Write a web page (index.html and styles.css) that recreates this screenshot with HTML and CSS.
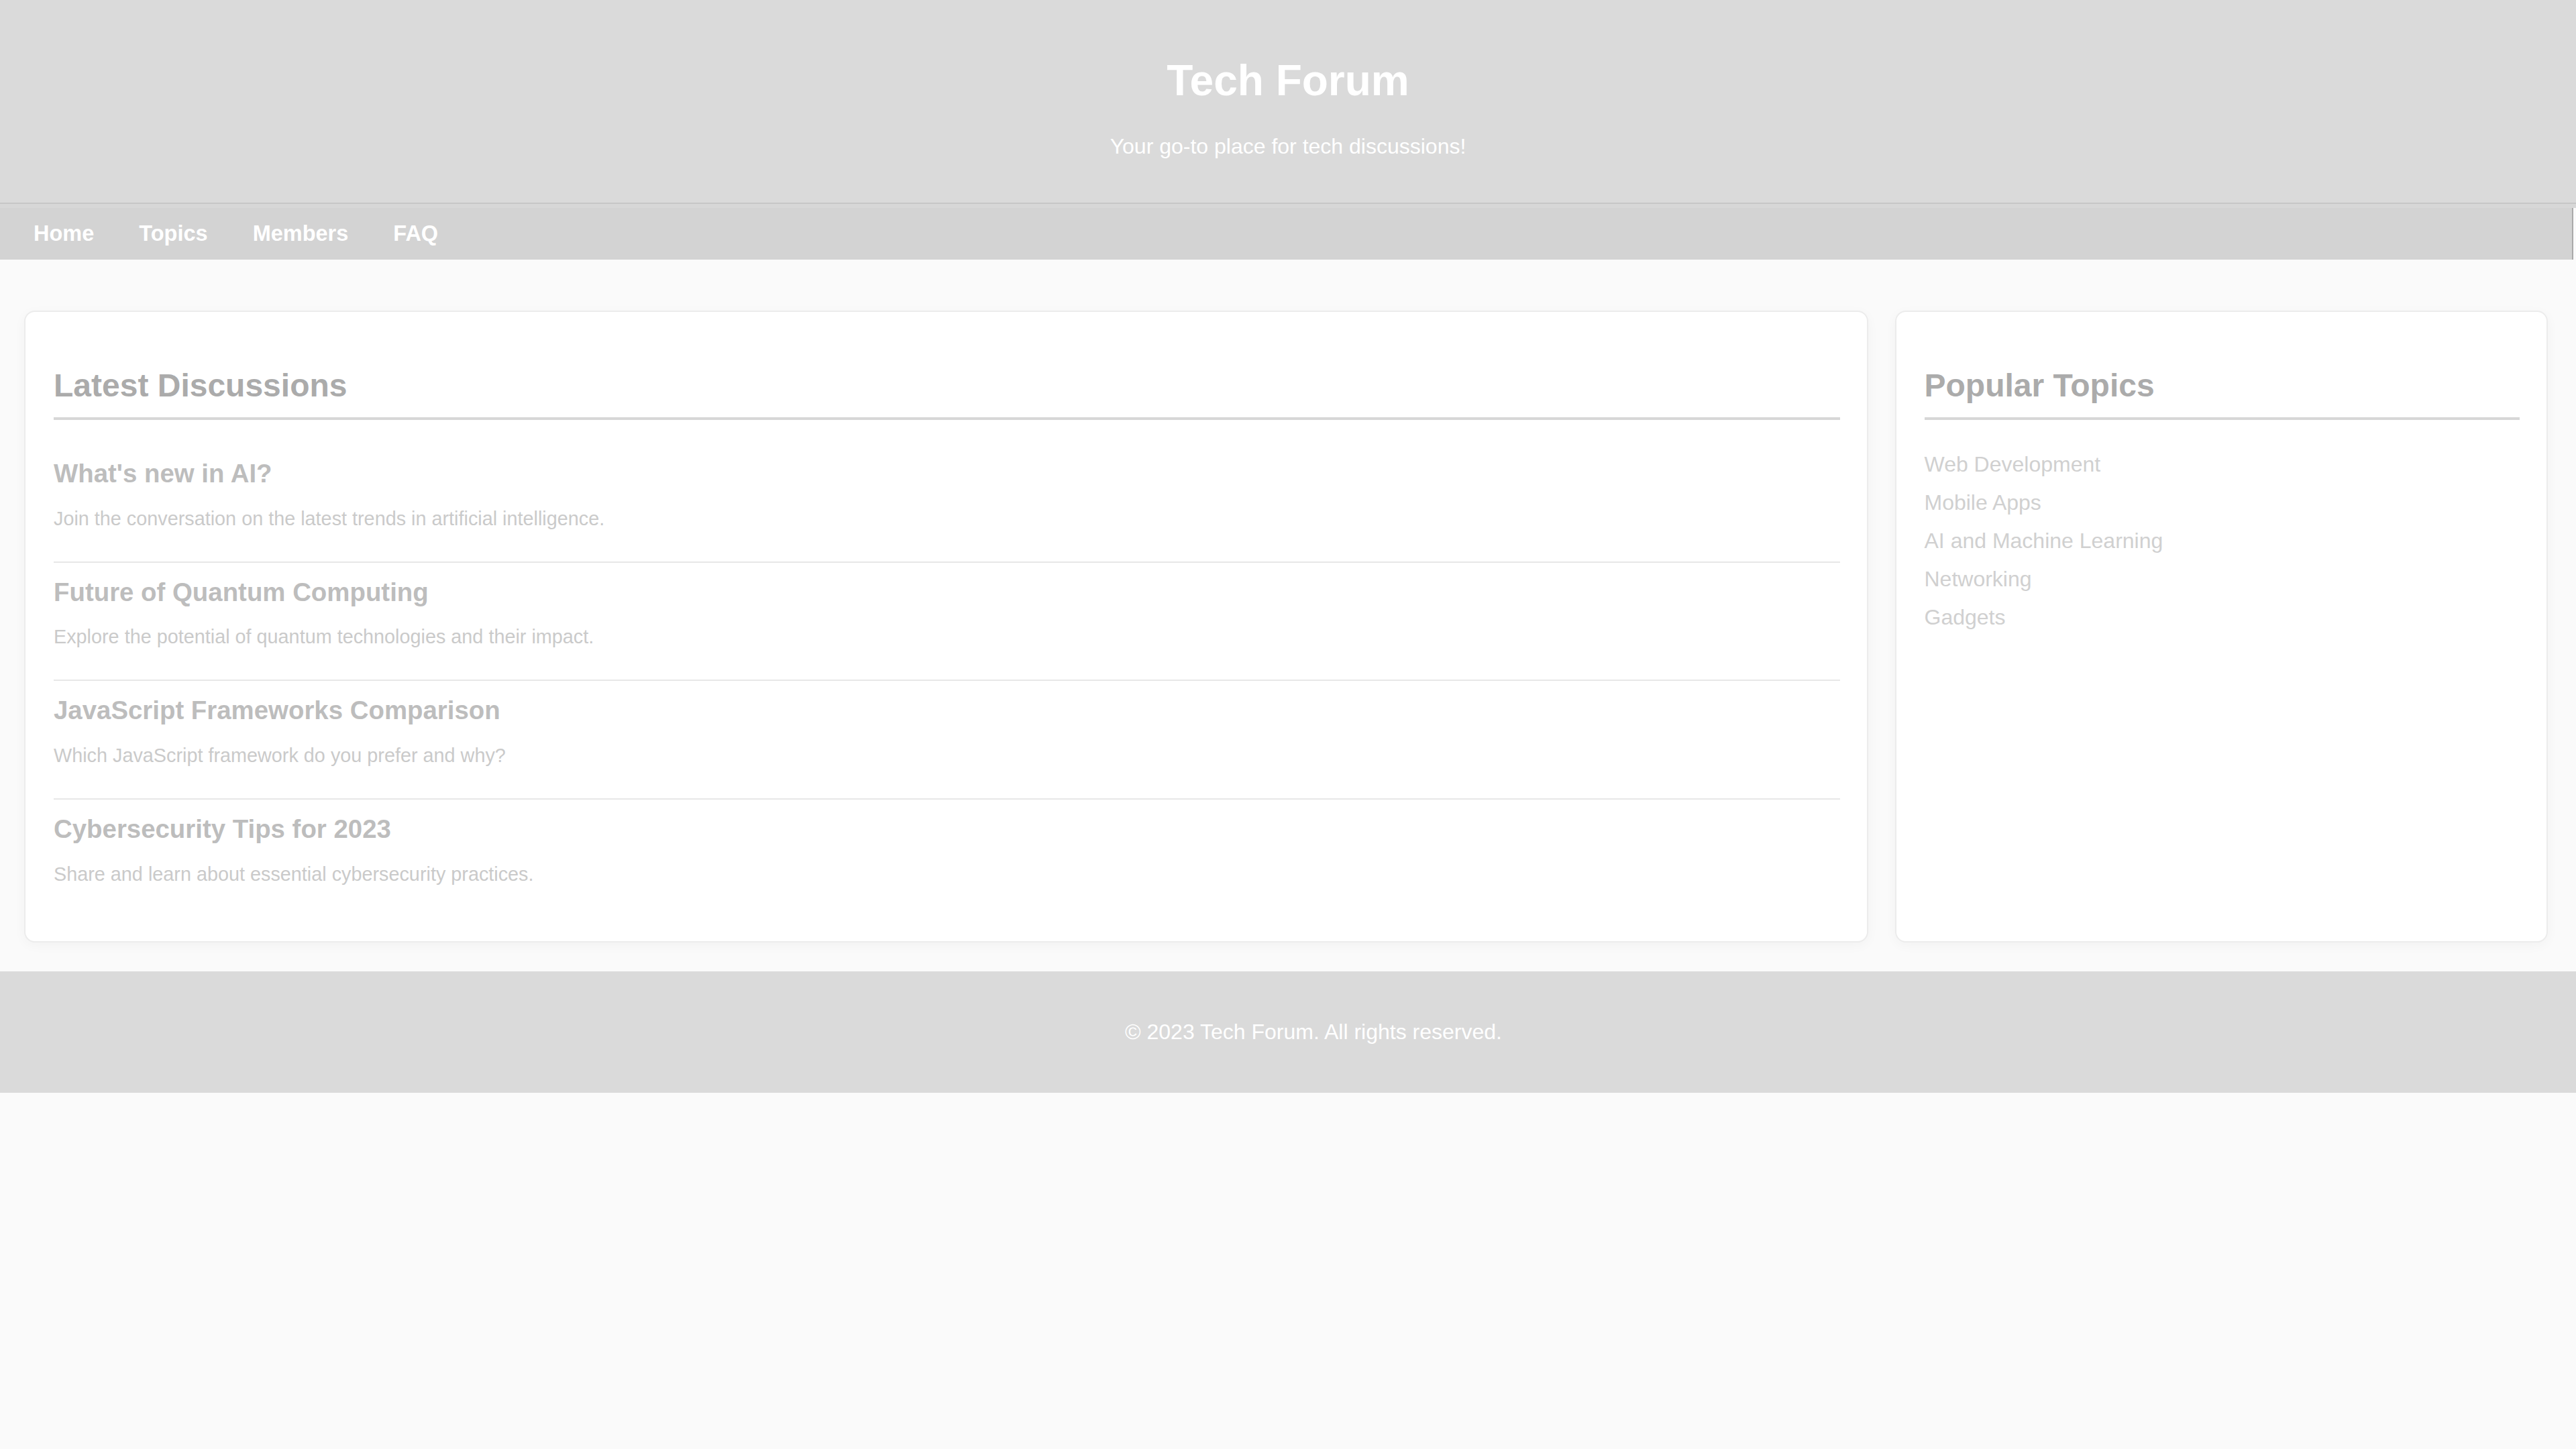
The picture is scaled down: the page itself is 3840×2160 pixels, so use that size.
FILE: index.html
```html
<!DOCTYPE html>
<html lang="en">
<head>
<meta charset="utf-8">
<title>Tech Forum</title>
<link rel="stylesheet" href="styles.css">
</head>
<body>
<header class="site-header">
  <h1 class="site-title">Tech Forum</h1>
  <p class="tagline">Your go-to place for tech discussions!</p>
</header>
<nav class="nav">
  <a href="#">Home</a>
  <a href="#">Topics</a>
  <a href="#">Members</a>
  <a href="#">FAQ</a>
</nav>
<main class="main">
  <section class="card card-main">
    <h2 class="card-title">Latest Discussions</h2>
    <article class="post">
      <h3>What's new in AI?</h3>
      <p>Join the conversation on the latest trends in artificial intelligence.</p>
    </article>
    <article class="post">
      <h3>Future of Quantum Computing</h3>
      <p>Explore the potential of quantum technologies and their impact.</p>
    </article>
    <article class="post">
      <h3>JavaScript Frameworks Comparison</h3>
      <p>Which JavaScript framework do you prefer and why?</p>
    </article>
    <article class="post">
      <h3>Cybersecurity Tips for 2023</h3>
      <p>Share and learn about essential cybersecurity practices.</p>
    </article>
  </section>
  <aside class="card card-side">
    <h2 class="card-title">Popular Topics</h2>
    <ul class="topics">
      <li>Web Development</li>
      <li>Mobile Apps</li>
      <li>AI and Machine Learning</li>
      <li>Networking</li>
      <li>Gadgets</li>
    </ul>
  </aside>
</main>
<footer class="site-footer">
  <p>&copy; 2023 Tech Forum. All rights reserved.</p>
</footer>
</body>
</html>
```
FILE: styles.css
```css
html, body {
  margin: 0;
  padding: 0;
}

body {
  background: #fafafa;
  font-family: "Liberation Sans", Arial, sans-serif;
  line-height: normal;
}

.site-header {
  background: #dadada;
  color: #ffffff;
  text-align: center;
  padding: 40px 0 41px;
  box-shadow: inset 0 -6px 0 #d7d7d7, inset 0 -8px 0 #c6c6c6;
}

.site-title {
  font-size: 64px;
  font-weight: bold;
  margin: 43px 0;
}

.tagline {
  font-size: 32px;
  margin: 43px 0 32px;
}

.nav {
  background: #d3d3d3;
  display: flex;
  gap: 67px;
  padding: 20px 49px 20px 50px;
  margin-right: 4px;
  border-right: 2px solid #a9a9a9;
}

.nav a {
  color: #ffffff;
  font-size: 32.5px;
  font-weight: bold;
  text-decoration: none;
}

.main {
  display: flex;
  align-items: stretch;
  gap: 40px;
  padding: 0 42px 0 36px;
  margin: 76px 0 43px;
}

.card {
  background: #ffffff;
  border: 2px solid #ececec;
  border-radius: 16px;
  padding: 40px 40px 37px 42px;
  box-shadow: 0 4px 18px rgba(0, 0, 0, 0.035);
}

.card-main {
  flex: 3 1 0;
  min-width: 0;
}

.card-side {
  flex: 1 1 0;
  min-width: 0;
}

.card-title {
  font-size: 48px;
  font-weight: bold;
  color: #ababab;
  margin: 42px 0 36px;
  padding-bottom: 20px;
  border-bottom: 4px solid #d7d7d7;
}

.post {
  padding: 22px 0 18px;
  border-bottom: 2px solid #e7e7e7;
}

.post:last-child {
  border-bottom: none;
}

.post h3 {
  font-size: 38.4px;
  font-weight: bold;
  color: #bdbdbd;
  margin: 0;
}

.post p {
  font-size: 28.8px;
  color: #cacaca;
  margin: 28.8px 0;
}

.topics {
  list-style: none;
  margin: 38px 0 0;
  padding: 0;
}

.topics li {
  font-size: 32px;
  color: #d0d0d0;
  padding: 10px 0;
}

.site-footer {
  background: #dadada;
  color: #ffffff;
  text-align: center;
  padding: 40px 0 40px 76px;
}

.site-footer p {
  font-size: 32px;
  margin: 32px 0;
}
```
